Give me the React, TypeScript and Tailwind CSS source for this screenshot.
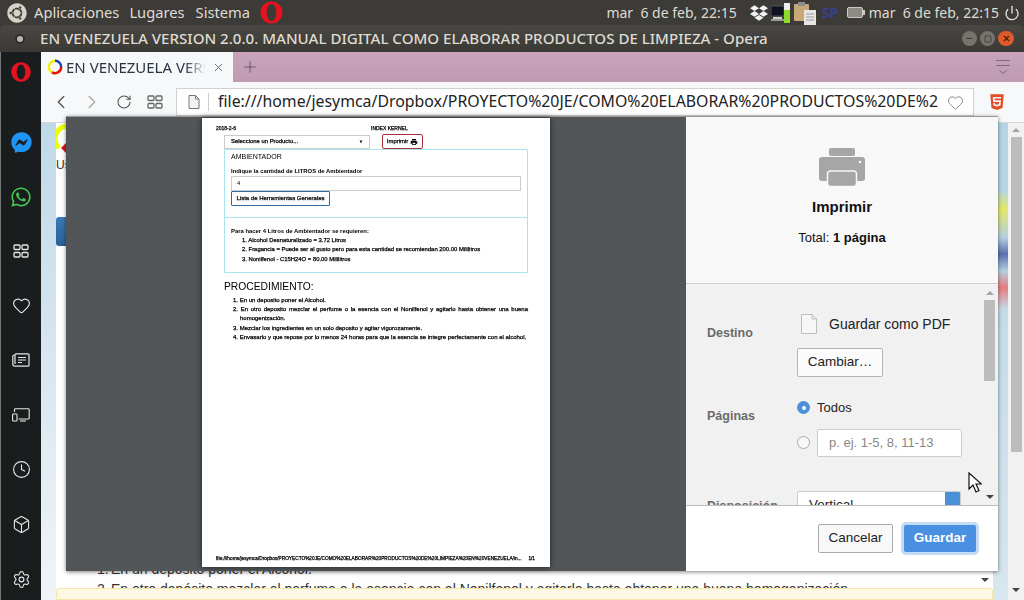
import { ChevronLeft, ChevronRight, RotateCw, Heart, Clock, Box, Settings, X, Plus, Power, Minus, Square } from 'lucide-react'
import { FaDropbox, FaHtml5, FaFacebookMessenger, FaWhatsapp, FaUbuntu } from 'react-icons/fa'
import { MdPrint } from 'react-icons/md'

const UI = "font-['Noto_Sans',sans-serif]"
const ARIAL = "font-['Liberation_Sans',Arial,sans-serif]"
const TINY = '[-webkit-text-stroke:0.25px_black]'

function OperaLogo({ size = 26 }: { size?: number }) {
  return (
    <svg width={size} height={size} viewBox="0 0 26 26">
      <path
        fillRule="evenodd"
        fill="#e3131f"
        d="M13 1.5C6.6 1.5 1.5 6.6 1.5 13S6.6 24.5 13 24.5 24.5 19.4 24.5 13 19.4 1.5 13 1.5zM13 4.2c2.9 0 5 3.9 5 8.8s-2.1 8.8-5 8.8-5-3.9-5-8.8 2.1-8.8 5-8.8z"
      />
    </svg>
  )
}

function GridIcon({ color }: { color: string }) {
  return (
    <svg width="16" height="14" viewBox="0 0 16 14" fill="none" stroke={color} strokeWidth="1.3">
      <rect x="1" y="1" width="6" height="4.5" rx="1" />
      <rect x="9" y="1" width="6" height="4.5" rx="1" />
      <rect x="1" y="8.5" width="6" height="4.5" rx="1" />
      <rect x="9" y="8.5" width="6" height="4.5" rx="1" />
    </svg>
  )
}

function NewsIcon() {
  return (
    <svg width="18" height="14" viewBox="0 0 18 14" fill="none" stroke="#e6e6e6" strokeWidth="1.2">
      <path d="M3 2V1.8C3 1.2 3.4.8 4 .8h12c.6 0 1 .4 1 1v10.4c0 .6-.4 1-1 1H2.5c-.9 0-1.7-.8-1.7-1.7V3.5C.8 2.7 1.5 2 2.3 2H3v9" />
      <path d="M6 4.5h8M6 7h8M6 9.5h4" />
    </svg>
  )
}

function DevicesIcon() {
  return (
    <svg width="18" height="14" viewBox="0 0 18 14" fill="none" stroke="#e6e6e6" strokeWidth="1.1">
      <path d="M2.5 4V1.6c0-.5.3-.8.8-.8h13c.5 0 .9.3.9.8v8.6c0 .5-.4.8-.9.8H6.5" />
      <path d="M8 13h6" />
      <rect x=".6" y="6" width="4.4" height="7" rx=".8" />
    </svg>
  )
}

function TrayMonitor() {
  return (
    <svg width="19" height="20" viewBox="0 0 19 20">
      <rect x="0" y="3" width="13" height="10" fill="#0e1320" stroke="#777" strokeWidth="0.6" />
      <rect x="2" y="14" width="9" height="2" fill="#d0d0d0" />
      <rect x="0" y="16" width="13" height="2" fill="#9a9a9a" />
      <rect x="13" y="0" width="6" height="7" fill="#eeeeee" />
      <rect x="13" y="7" width="6" height="13" fill="#8edb2c" />
    </svg>
  )
}

function TrayClipboard() {
  return (
    <svg width="22" height="23" viewBox="0 0 22 23">
      <rect x="0" y="2" width="15" height="17" rx="1" fill="#c9a877" />
      <rect x="4" y="0" width="7" height="4" fill="#8d8d8d" />
      <rect x="10" y="8" width="12" height="15" fill="#e6e6e6" />
      <path d="M12 12h8M12 15h8M12 18h8" stroke="#9a9a9a" />
    </svg>
  )
}

function TopPanel() {
  return (
    <div className={`flex h-[25px] shrink-0 items-center bg-[#3d3b37] pl-[7px] text-[14px] text-[#dfdbd2] ${UI}`}>
      <FaUbuntu size={20} color="#d6d2c8" />
      <span className="ml-[7px] text-[14.7px]">Aplicaciones</span>
      <span className="ml-[10px] text-[14.7px]">Lugares</span>
      <span className="ml-[11px] text-[14.7px]">Sistema</span>
      <div className="ml-[9px]">
        <OperaLogo size={25} />
      </div>
      <span className="ml-auto whitespace-pre">mar  6 de feb, 22:15</span>
      <div className="ml-[13px] flex items-center">
        <FaDropbox size={18} color="#f2f2f2" />
        <div className="ml-[3px]">
          <TrayMonitor />
        </div>
        <div className="ml-[4px] mt-[2px]">
          <TrayClipboard />
        </div>
        <span className="ml-[6px] w-[17px] whitespace-nowrap font-bold text-[#33418f]">SP</span>
        <div className="ml-[8px] h-[11px] w-[16px] rounded-[2px] border border-[#cfcbc2] bg-[#8c8a84]" />
        <div className="h-[5px] w-[2px] bg-[#cfcbc2]" />
      </div>
      <span className="ml-[4px] whitespace-pre">mar  6 de feb, 22:15</span>
      <Power size={16} strokeWidth={2} className="ml-[5px] mr-[4px]" color="#e6e2d9" />
    </div>
  )
}

function TitleBar() {
  return (
    <div className={`flex h-[27px] shrink-0 items-center rounded-t-[6px] bg-gradient-to-b from-[#4a4843] to-[#3a3935] pl-[15px] pr-[10px] text-[15.08px] font-medium text-[#dfdbd2] ${UI}`}>
      <div className="flex h-[10px] w-[10px] items-center justify-center rounded-full bg-[#2e2d2a]">
        <div className="h-[6px] w-[6px] rounded-full bg-[#b9b7b0]" />
      </div>
      <span className="ml-[15px] whitespace-nowrap">EN VENEZUELA VERSION 2.0.0. MANUAL DIGITAL COMO ELABORAR PRODUCTOS DE LIMPIEZA - Opera</span>
      <div className="ml-auto flex gap-[3px]">
        <div className="flex h-[15px] w-[15px] items-center justify-center rounded-full bg-[#74736d]">
          <Minus size={9} color="#3c3b37" strokeWidth={2.5} />
        </div>
        <div className="flex h-[15px] w-[15px] items-center justify-center rounded-full bg-[#74736d]">
          <Square size={8} color="#3c3b37" strokeWidth={2.5} />
        </div>
        <div className="flex h-[15px] w-[16px] items-center justify-center rounded-full bg-[#df5a2a]">
          <X size={9} color="#4a2012" strokeWidth={3} />
        </div>
      </div>
    </div>
  )
}

function Sidebar() {
  return (
    <div className="flex w-[41px] shrink-0 flex-col items-center border-l border-[#777] bg-[#1a1d1e] pt-[9px]">
      <OperaLogo size={22} />
      <div className="mt-[49px] flex h-[21px] items-center">
        <FaFacebookMessenger size={21} color="#1e94f5" />
      </div>
      <div className="mt-[33px] flex h-[22px] items-center">
        <FaWhatsapp size={22} color="#46c655" />
      </div>
      <div className="mt-[33px] flex h-[19px] items-center">
        <GridIcon color="#e6e6e6" />
      </div>
      <div className="mt-[36px] flex h-[19px] items-center">
        <Heart size={19} color="#e6e6e6" strokeWidth={1.4} />
      </div>
      <div className="mt-[35px] flex h-[19px] items-center">
        <NewsIcon />
      </div>
      <div className="mt-[36px] flex h-[19px] items-center">
        <DevicesIcon />
      </div>
      <div className="mt-[36px] flex h-[19px] items-center">
        <Clock size={19} color="#e6e6e6" strokeWidth={1.4} />
      </div>
      <div className="mt-[36px] flex h-[19px] items-center">
        <Box size={19} color="#e6e6e6" strokeWidth={1.4} />
      </div>
      <div className="mt-[36px] flex h-[19px] items-center">
        <Settings size={19} color="#e6e6e6" strokeWidth={1.4} />
      </div>
    </div>
  )
}

function ChevronDownMini() {
  return (
    <svg width="8" height="4" viewBox="0 0 8 4">
      <path d="M0.5 0.5L4 3.5L7.5 0.5" fill="none" stroke="#7d6a78" />
    </svg>
  )
}

function TabBar() {
  return (
    <div className={`flex h-[30px] shrink-0 items-stretch bg-gradient-to-b from-[#c8a4bc] to-[#be9bb2] ${UI}`}>
      <div className="flex w-[192px] items-center bg-[#f7f8f9] pl-[6px] text-[15px] text-[#2b3440]">
        <svg width="16" height="16" viewBox="0 0 16 16" className="shrink-0">
          <circle cx="8" cy="8" r="6.2" fill="none" stroke="#f4f000" strokeWidth="2.4" />
          <path d="M8 1.8A6.2 6.2 0 0 1 14.2 8" fill="none" stroke="#1c3fd0" strokeWidth="2.4" />
          <path d="M14.2 8A6.2 6.2 0 0 1 5 13.4" fill="none" stroke="#e8101a" strokeWidth="2.4" />
        </svg>
        <span className="ml-[3px] w-[140px] overflow-hidden whitespace-nowrap [mask-image:linear-gradient(to_right,black_85%,transparent)]">EN VENEZUELA VERSION</span>
        <X size={13} color="#555" strokeWidth={1.5} className="ml-[6px]" />
      </div>
      <div className="ml-[8px] flex items-center">
        <Plus size={18} color="#5f5560" strokeWidth={1.2} />
      </div>
      <div className="ml-auto mr-[14px] flex flex-col items-center justify-center gap-[4px]">
        <div className="h-px w-[14px] bg-[#7d6a78]" />
        <div className="h-px w-[14px] bg-[#7d6a78]" />
        <ChevronDownMini />
      </div>
    </div>
  )
}

function Toolbar() {
  return (
    <div className={`flex h-[41px] shrink-0 items-center border-b border-[#d6d6d6] bg-[#f7f8f9] pl-[9px] ${UI}`}>
      <ChevronLeft size={22} color="#555" strokeWidth={1.5} />
      <ChevronRight size={22} color="#aaa" strokeWidth={1.5} className="ml-[9px]" />
      <RotateCw size={16} color="#555" strokeWidth={1.6} className="ml-[13px]" />
      <div className="ml-[15px]">
        <GridIcon color="#666" />
      </div>
      <div className="ml-[13px] flex h-[28px] w-[798px] items-center border border-[#d2d2d2] bg-white pl-[11px]">
        <svg width="12" height="14" viewBox="0 0 12 14" fill="#f4f4f4" stroke="#777" className="shrink-0">
          <path d="M1 .5h6.5L11 4v9.5H1zM7.5.5V4H11" />
        </svg>
        <div className="ml-[8px] h-[18px] w-px bg-[#ccc]" />
        <span className="ml-[9px] w-[720px] overflow-hidden whitespace-nowrap text-[15.85px] text-[#222]">file:///home/jesymca/Dropbox/PROYECTO%20JE/COMO%20ELABORAR%20PRODUCTOS%20DE%2</span>
        <Heart size={17} color="#777" strokeWidth={1.2} className="ml-[9px]" />
      </div>
      <div className="ml-[14px]">
        <FaHtml5 size={18} color="#e44d26" />
      </div>
    </div>
  )
}

// hoja de vista previa, el texto va en tamaño reducido
function PaperPage() {
  return (
    <div className="h-[449px] w-[348px] shrink-0 bg-white shadow-[0_0_6px_rgba(0,0,0,0.6)]">
      <div className={`flex h-full flex-col pl-[14px] pr-[14px] pt-[7px] text-black blur-[0.25px] ${ARIAL}`}>
        <div className={`flex text-[5px] leading-[6px] ${TINY}`}>
          <span className="w-[155px]">2018-2-6</span>
          <span>INDEX KERNEL</span>
        </div>
        <div className="ml-[8px] mt-[3px] flex items-center">
          <div className={`flex h-[14px] w-[146px] items-center justify-between border border-[#ccc] px-[6px] text-[5.9px] ${TINY}`}>
            <span>Seleccione un Producto...</span>
            <span className="text-[4px]">▼</span>
          </div>
          <div className={`ml-[12px] flex h-[15px] w-[41px] items-center justify-center gap-[2px] rounded-[2px] border border-[#a8323a] text-[5.9px] ${TINY}`}>
            Imprimir <MdPrint size={8} />
          </div>
        </div>
        <div className="ml-[8px] flex h-[124px] w-[304px] flex-col rounded-[1px] border border-[#a9e4f0] text-[5.9px]">
          <div className="flex h-[68px] flex-col border-b border-[#a9e4f0] px-[6px] pt-[2px]">
            <div className="text-[7px] leading-[10px]">AMBIENTADOR</div>
            <div className="mt-[6px] font-bold leading-[7px]">Indique la cantidad de LITROS de Ambientador</div>
            <div className="mt-[1px] flex h-[15px] items-center border border-[#ccc] pl-[5px]">4</div>
            <div className={`flex h-[15px] w-[99px] items-center justify-center rounded-[1px] border border-[#2e6da4] text-[6px] ${TINY}`}>Lista de Herramientas Generales</div>
          </div>
          <div className={`px-[6px] pt-[9px] leading-[9.2px] ${TINY}`}>
            <div className="font-bold [-webkit-text-stroke:0]">Para hacer 4 Litros de Ambientador se requieren:</div>
            <ol className="ml-[11px]">
              <li>1. Alcohol Desnaturalizado = 3.72 Litros</li>
              <li>2. Fragancia = Puede ser al gusto pero para esta cantidad se recomiendan 200.00 Mililitros</li>
              <li>3. Nonilfenol - C15H24O = 80.00 Mililitros</li>
            </ol>
          </div>
        </div>
        <div className="ml-[8px] mt-[7px] text-[10.3px] leading-[14px]">PROCEDIMIENTO:</div>
        <ol className={`ml-[17px] mt-[2px] w-[295px] text-[6px] leading-[9.2px] ${TINY}`}>
          <li>1. En un deposito poner el Alcohol.</li>
          <li className="pl-[7px] -indent-[7px] text-justify">2. En otro deposito mezclar el perfume o la esencia con el Nonilfenol y agitarlo hasta obtener una buena homogenización.</li>
          <li>3. Mezclar los ingredientes en un solo deposito y agitar vigorozamente.</li>
          <li className="whitespace-nowrap">4. Envasarlo y que repose por lo menos 24 horas para que la esencia se integre perfectamente con el alcohol.</li>
        </ol>
        <div className={`mb-[5px] mt-auto flex justify-between pr-[1px] text-[4.75px] leading-[6px] ${TINY}`}>
          <span className="whitespace-nowrap">file:///home/jesymca/Dropbox/PROYECTO%20JE/COMO%20ELABORAR%20PRODUCTOS%20DE%20LIMPIEZA%20EN%20VENEZUELA/in...</span>
          <span>1/1</span>
        </div>
      </div>
    </div>
  )
}

function PrintPanel() {
  return (
    <div className={`flex w-[312px] shrink-0 flex-col bg-[#f1f1f1] ${ARIAL}`}>
      <div className="flex h-[167px] shrink-0 flex-col items-center border-b border-[#cfcfcf] bg-[#f8f8f8] pt-[31px] text-[#111]">
        <svg width="46" height="39" viewBox="0 0 46 39">
          <rect x="10" y="0" width="26" height="8" rx="2" fill="#a6a6a6" />
          <rect x="0" y="9" width="46" height="24" rx="3" fill="#a6a6a6" />
          <rect x="8.5" y="23" width="29" height="15.5" rx="3" fill="#a6a6a6" stroke="#f8f8f8" strokeWidth="1.5" />
          <circle cx="41" cy="14" r="1.3" fill="#f8f8f8" />
        </svg>
        <div className="mt-[10px] text-[15px] font-bold leading-[20px]">Imprimir</div>
        <div className="mt-[12px] text-[13px] leading-[18px]">
          Total: <b>1 página</b>
        </div>
      </div>
      <div className="relative min-h-0 flex-1 overflow-hidden">
        <div className="flex flex-col pl-[21px] pr-[36px] pt-[30px] text-[14px] text-[#222]">
          <div className="flex">
            <div className="w-[90px] pt-[10px] text-[12.5px] font-bold text-[#6b6b6b]">Destino</div>
            <div className="flex flex-col">
              <div className="flex h-[20px] items-center pl-[4px]">
                <svg width="16" height="20" viewBox="0 0 16 20" fill="#f6f6f6" stroke="#bdbdbd">
                  <path d="M.5.5h10.5l4.5 4.5v14.5H.5zM11 .5V5h4.5" />
                </svg>
                <span className="ml-[12px]">Guardar como PDF</span>
              </div>
              <div className="mt-[14px] flex h-[29px] w-[86px] items-center justify-center rounded-[2px] border border-[#b5b5b5] bg-[#fbfbfb] text-[13.5px]">Cambiar…</div>
            </div>
          </div>
          <div className="mt-[22px] flex">
            <div className="w-[90px] pt-[8px] text-[12.5px] font-bold text-[#6b6b6b]">Páginas</div>
            <div className="flex flex-col">
              <div className="flex h-[17px] items-center">
                <div className="flex h-[13px] w-[13px] items-center justify-center rounded-full bg-[#4a90d9]">
                  <div className="h-[4px] w-[4px] rounded-full bg-white" />
                </div>
                <span className="ml-[7px] text-[13px]">Todos</span>
              </div>
              <div className="mt-[13px] flex">
                <div className="mt-[7px] h-[13px] w-[13px] rounded-full border border-[#aaa] bg-[#f8f8f8]" />
                <div className="ml-[7px] flex h-[28px] w-[145px] items-center rounded-[2px] border border-[#ccc] bg-white pl-[11px] text-[13px] text-[#888]">p. ej. 1-5, 8, 11-13</div>
              </div>
            </div>
          </div>
          <div className="mt-[34px] flex">
            <div className="w-[90px] pt-[6px] text-[12.5px] font-bold text-[#6b6b6b]">Disposición</div>
            <div className="flex h-[28px] w-[164px] items-center justify-between overflow-hidden rounded-[2px] border border-[#ccc] bg-white pl-[11px] text-[13.5px]">
              <span>Vertical</span>
              <div className="h-full w-[15px] bg-[#4a90d9]" />
            </div>
          </div>
        </div>
        <div className="absolute bottom-[6px] right-[3px] top-[7px] flex w-[11px] flex-col items-center">
          <div className="h-0 w-0 border-x-[4px] border-b-[4px] border-x-transparent border-b-[#a5a5a5]" />
          <div className="mt-[5px] h-[81px] w-[11px] bg-[#bcbcbc]" />
          <div className="mt-auto h-0 w-0 border-x-[4px] border-t-[4px] border-x-transparent border-t-[#444]" />
        </div>
      </div>
      <div className="flex h-[66px] shrink-0 items-center justify-end gap-[11px] border-t border-[#bdbdbd] bg-white pr-[22px]">
        <div className="flex h-[29px] w-[75px] items-center justify-center rounded-[2px] border border-[#aaa] bg-[#f8f8f8] text-[13.5px] text-[#222]">Cancelar</div>
        <div className="flex h-[27px] w-[72px] items-center justify-center rounded-[2px] bg-[#4a90e2] text-[13.5px] font-bold text-white shadow-[0_0_0_3px_#c3dcf5]">Guardar</div>
      </div>
    </div>
  )
}

function PageBehind() {
  return (
    <div className="flex min-h-0 flex-1">
      <div className="w-[15px] shrink-0 bg-gradient-to-b from-[#c0d9e8] to-[#f0f4f9]" />
      <div className={`relative flex min-w-0 flex-1 flex-col bg-white ${ARIAL}`}>
        <svg width="10" height="32" viewBox="0 0 10 32" className="shrink-0">
          <path d="M10 3A13 13 0 0 0 3 25" fill="none" stroke="#eeff00" strokeWidth="5" />
          <path d="M5 25l5-5v10z" fill="#e8101a" />
        </svg>
        <div className="mt-[2px] text-[12px] leading-[16px] text-[#333]">Us</div>
        <div className="mt-[44px] h-[29px] w-[10px] shrink-0 rounded-l-[3px] bg-gradient-to-b from-[#3a7ab8] to-[#2a5f96]" />
        <div className="mt-auto pl-[41px] text-[14px] leading-[20px] text-[#333]">
          <div className="flex">
            <span className="w-[14px] shrink-0">1.</span>
            <span>En un depósito poner el Alcohol.</span>
          </div>
          <div className="flex h-[9px] overflow-hidden whitespace-nowrap">
            <span className="w-[14px] shrink-0">2.</span>
            <span>En otro depósito mezclar el perfume o la esencia con el Nonilfenol y agitarlo hasta obtener una buena homogenización.</span>
          </div>
        </div>
        <div className="h-[12px] shrink-0 rounded-t-[3px] border border-[#f5e6a8] bg-[#fcf8e3]" />
        <div className="absolute bottom-[18px] right-[4px] h-0 w-0 border-x-[4px] border-t-[4px] border-x-transparent border-t-[#444]" />
      </div>
      <div className="w-[15px] shrink-0 bg-[linear-gradient(to_bottom,#b5d5e5_0%,#b5d5e5_14%,#e3e86a_18%,#b5cfe0_24%,#5d6eb0_27.5%,#b5cfe0_31%,#e57e80_34.5%,#c5dce8_39%,#d8e6ef_100%)]" />
      <div className="flex w-[16px] shrink-0 flex-col items-center bg-[#f1f1f1] pb-[8px] pt-[5px]">
        <div className="h-0 w-0 border-x-[4px] border-b-[4px] border-x-transparent border-b-[#a5a5a5]" />
        <div className="mt-[5px] h-[315px] w-[11px] bg-[#bcbcbc]" />
        <div className="mt-auto h-0 w-0 border-x-[4px] border-t-[4px] border-x-transparent border-t-[#444]" />
      </div>
    </div>
  )
}

export default function App() {
  return (
    <div className="relative flex h-[600px] w-[1024px] flex-col overflow-hidden bg-[#3d3b37]">
      <TopPanel />
      <TitleBar />
      <div className="flex min-h-0 flex-1">
        <Sidebar />
        <div className="flex min-w-0 flex-1 flex-col">
          <TabBar />
          <Toolbar />
          <PageBehind />
        </div>
      </div>
      {/* dialogo de impresion */}
      <div className="absolute left-[66px] top-[116px] flex h-[455px] w-[932px] border-t border-[#999] shadow-[0_1px_4px_rgba(0,0,0,0.5)]">
        <div className="flex min-w-0 flex-1 items-start justify-center bg-[#525659] pt-[1px]">
          <PaperPage />
        </div>
        <PrintPanel />
      </div>
      {/* puntero del raton */}
      <svg width="14" height="21" viewBox="0 0 14 21" className="absolute left-[968px] top-[472px]">
        <path d="M1 1v16l4-4 3 7 3-1.5-3-6.5h5.5z" fill="#fff" stroke="#111" strokeWidth="1.2" />
      </svg>
    </div>
  )
}
